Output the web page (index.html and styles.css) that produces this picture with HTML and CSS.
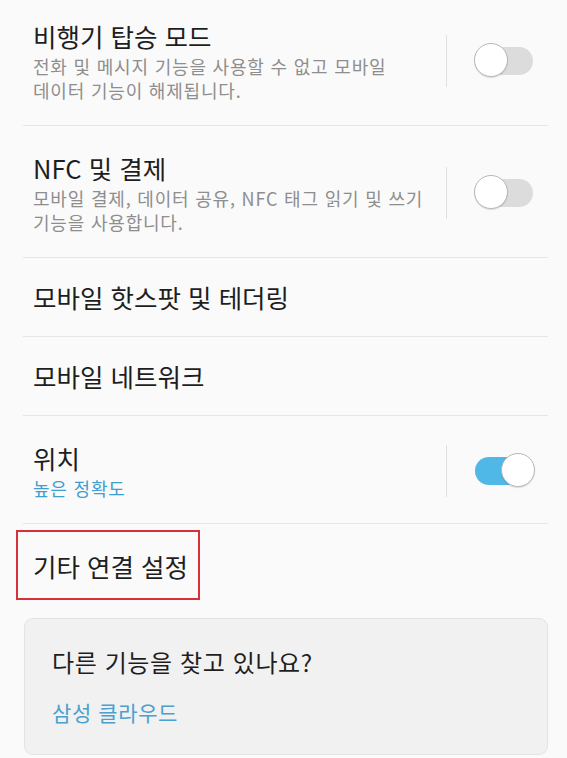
FILE: index.html
```html
<!DOCTYPE html>
<html lang="ko">
<head>
  <meta charset="UTF-8">
  <title>연결</title>
  <link rel="stylesheet" href="styles.css">
</head>
<body>

  <div class="list">
    <div class="row">
      <div class="row-text">
        <div class="title">비행기 탑승 모드</div>
        <div class="sub">전화 및 메시지 기능을 사용할 수 없고 모바일<br>데이터 기능이 해제됩니다.</div>
      </div>
      <div class="sep"></div>
      <div class="switch"></div>
    </div>

    <div class="row">
      <div class="row-text">
        <div class="title">NFC 및 결제</div>
        <div class="sub">모바일 결제, 데이터 공유, NFC 태그 읽기 및 쓰기<br>기능을 사용합니다.</div>
      </div>
      <div class="sep"></div>
      <div class="switch"></div>
    </div>

    <div class="row single">
      <div class="title">모바일 핫스팟 및 테더링</div>
    </div>

    <div class="row single">
      <div class="title">모바일 네트워크</div>
    </div>

    <div class="row">
      <div class="row-text">
        <div class="title">위치</div>
        <div class="sub link">높은 정확도</div>
      </div>
      <div class="sep"></div>
      <div class="switch on"></div>
    </div>

    <div class="row last">
      <div class="title marked">기타 연결 설정</div>
    </div>

    <div class="card">
      <div class="card-title">다른 기능을 찾고 있나요?</div>
      <div class="card-link">삼성 클라우드</div>
    </div>
  </div>

</body>
</html>
```

FILE: styles.css
```css
body {
  font-family: "Noto Sans CJK KR", "Noto Sans", sans-serif;
  margin: 0;
  padding: 0;
  background-color: #fafafa;
  overflow: hidden;
}

.list {
  margin: -6px 19px 0 23px;
}

.row {
  display: flex;
  align-items: center;
  padding: 25px 15px 23px 10px;
  border-bottom: 1px solid #e6e6e6;
}

.row.single {
  padding-top: 22px;
  padding-bottom: 22px;
}

.row.last {
  border-bottom: none;
  padding-top: 25px;
  padding-bottom: 20px;
}

.row-text {
  flex: 1;
}

.title {
  font-size: 25.5px;
  line-height: 34px;
  color: #1e1e1e;
}

.sub {
  margin-top: 1px;
  font-size: 18px;
  line-height: 24px;
  letter-spacing: 0.8px;
  color: #8e8e8e;
}

.sub.link {
  color: #3f9dd2;
}

.sep {
  width: 1px;
  height: 52px;
  background-color: #e0e0e0;
  margin-right: 28px;
}

.switch {
  position: relative;
  width: 58px;
  height: 28px;
  border-radius: 14px;
  background-color: #dcdcdc;
}

.switch::after {
  content: "";
  position: absolute;
  top: -4px;
  left: -1px;
  width: 34px;
  height: 34px;
  box-sizing: border-box;
  border-radius: 50%;
  background-color: #fff;
  border: 1px solid #b8b8b8;
  box-shadow: 0 1px 1px rgba(0, 0, 0, 0.12);
}

.switch.on {
  background-color: #4fb8e6;
}

.switch.on::after {
  left: auto;
  right: -2px;
}

.marked {
  position: relative;
  display: inline-block;
}

.marked::after {
  content: "";
  position: absolute;
  top: -19px;
  bottom: -17px;
  left: -17px;
  right: -12px;
  border: 2px solid #d6313a;
}

.card {
  margin: 15px 0 0 1px;
  padding: 26px 27px 27px;
  background-color: #f1f1f1;
  border: 1px solid #e3e3e3;
  border-radius: 9px;
}

.card-title {
  font-size: 24px;
  line-height: 34px;
  letter-spacing: 0.6px;
  color: #1e1e1e;
}

.card-link {
  margin-top: 18px;
  font-size: 21px;
  line-height: 30px;
  letter-spacing: 0.6px;
  color: #4aa0cf;
}
```
